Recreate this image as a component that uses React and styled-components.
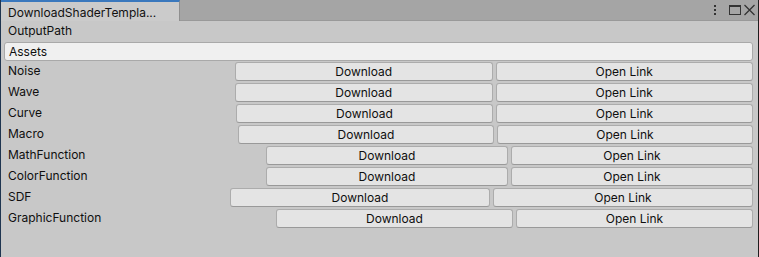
import React from "react";
import styled, { createGlobalStyle } from "styled-components";

const Global = createGlobalStyle`
  html, body { margin: 0; padding: 0; background: #c8c8c8; }
  body { font-family: Inter, "Liberation Sans", sans-serif; font-size: 12px; color: #0f0f0f; }
  * { box-sizing: border-box; }
`;

const Window = styled.div`
  width: 759px;
  height: 257px;
  display: flex;
  flex-direction: column;
  background: #c8c8c8;
  border-left: 1px solid #1f3550;
  border-right: 1px solid #1e1e1e;
  overflow: hidden;
`;

const TabBar = styled.div`
  height: 21px;
  display: flex;
  align-items: stretch;
  background: #a5a5a5;
  border-bottom: 1px solid #999;
`;

const Tab = styled.div`
  width: 179px;
  background: #cbcbcb;
  border-top: 2px solid #3a78bd;
  border-right: 1px solid #8f8f8f;
  padding: 1px 0 0 7px;
  display: flex;
  align-items: center;
  font-size: 12px;
  color: #111;
  margin-bottom: -1px;
`;

const Spacer = styled.div`
  flex: 1;
`;

const TabIcons = styled.div`
  display: flex;
  align-items: center;
  gap: 1px;
  padding-right: 2px;
`;

const Content = styled.div`
  flex: 1;
  display: flex;
  flex-direction: column;
  padding: 0 5px 0 2px;
`;

const Label = styled.div`
  height: 20px;
  line-height: 20px;
  padding-left: 5px;
  white-space: nowrap;
`;

const TextField = styled.div`
  margin: 1px 0 0 1px;
  height: 19px;
  line-height: 17px;
  background: #f0f0f0;
  border: 1px solid #a9a9a9;
  border-radius: 3px;
  padding-left: 4px;
`;

const Row = styled.div`
  display: flex;
  align-items: center;
  height: 21px;
`;

const RowLabel = styled(Label)`
  flex: 1;
  margin-top: -1px;
`;

const ButtonGroup = styled.div`
  width: ${(p) => p.$w}px;
  display: flex;
  gap: 3px;
`;

const Button = styled.div`
  flex: 1;
  height: 19px;
  line-height: 17px;
  text-align: center;
  background: #e4e4e4;
  border: 1px solid #acacac;
  border-bottom-color: #999;
  border-radius: 3px;
  color: #0f0f0f;
`;

const rows = [
  ["Noise", 235],
  ["Wave", 235],
  ["Curve", 236],
  ["Macro", 238],
  ["MathFunction", 266],
  ["ColorFunction", 266],
  ["SDF", 230],
  ["GraphicFunction", 276],
];

export default function App() {
  return (
    <>
      <Global />
      <Window>
        <TabBar>
          <Tab>DownloadShaderTempla...</Tab>
          <Spacer />
          <TabIcons>
            <svg width="16" height="12" viewBox="0 0 16 12">
              <rect x="3" y="1" width="2" height="2" fill="#333" />
              <rect x="3" y="5" width="2" height="2" fill="#333" />
              <rect x="3" y="9" width="2" height="2" fill="#333" />
            </svg>
            <svg width="14" height="12" viewBox="0 0 14 12">
              <rect x="1.5" y="1.5" width="11" height="9" fill="none" stroke="#333" strokeWidth="1" />
              <rect x="1" y="1" width="12" height="2" fill="#333" />
            </svg>
            <svg width="13" height="12" viewBox="0 0 13 12">
              <path d="M1.5 1 L11.5 11 M11.5 1 L1.5 11" stroke="#333" strokeWidth="1.3" />
            </svg>
          </TabIcons>
        </TabBar>
        <Content>
          <Label>OutputPath</Label>
          <TextField>Assets</TextField>
          {rows.map(([name, start]) => (
            <Row key={name}>
              <RowLabel>{name}</RowLabel>
              <ButtonGroup $w={753 - start}>
                <Button>Download</Button>
                <Button>Open Link</Button>
              </ButtonGroup>
            </Row>
          ))}
        </Content>
      </Window>
    </>
  );
}
